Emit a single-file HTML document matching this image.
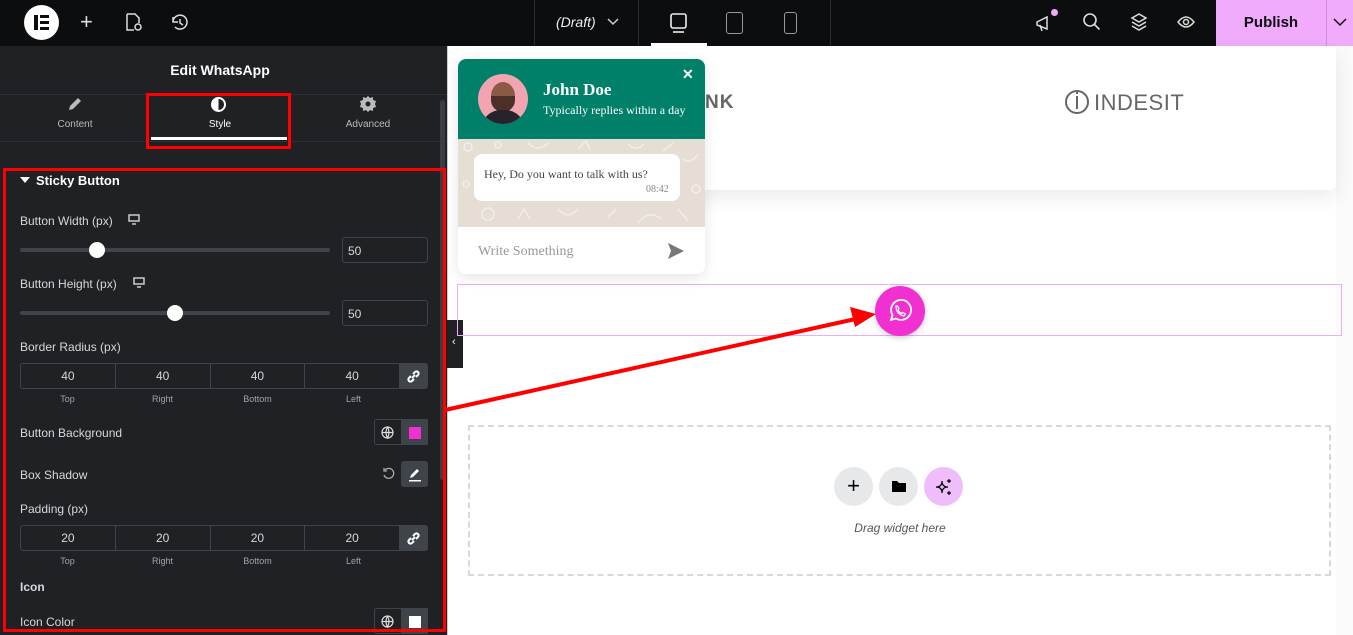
<!DOCTYPE html>
<html><head><meta charset="utf-8"><style>
*{box-sizing:border-box;margin:0;padding:0}
body{width:1353px;height:635px;overflow:hidden;background:#fff;font-family:"Liberation Sans",sans-serif;position:relative}
.top{position:absolute;left:0;top:0;width:1353px;height:46px;background:#0c0d0e}
.panel{position:absolute;left:0;top:46px;width:447px;height:589px;background:#1f2124;color:#d5d8dc}
.lbl{position:absolute;left:20px;font-size:12px;color:#d5d8dc}
.abs{position:absolute}
.track{position:absolute;left:20px;width:310px;height:4px;background:#3f444b;border-radius:2px}
.knob{position:absolute;width:16px;height:16px;border-radius:50%;background:#fff}
.num{position:absolute;left:342px;width:86px;height:26px;border:1px solid #3f444b;border-radius:3px;font-size:12px;color:#d5d8dc;padding:6px 5px}
.dims{position:absolute;left:20px;width:408px;height:26px;border:1px solid #3f444b;border-radius:3px;display:flex}
.dims div{flex:1;border-right:1px solid #3f444b;text-align:center;font-size:12px;line-height:24px;color:#d5d8dc}
.dims div.lk{flex:0 0 27px;background:#3f444b;border:none;position:relative}
.sub{position:absolute;font-size:9px;color:#9da5ae;width:95px;text-align:center}
</style></head><body>
<div class="top">
 <div class="abs" style="left:24px;top:5px;width:35px;height:35px;border-radius:50%;background:#fff"></div>
 <div class="abs" style="left:34px;top:15px;width:4px;height:15px;background:#0c0d0e"></div>
 <div class="abs" style="left:40px;top:15px;width:9px;height:3px;background:#0c0d0e"></div>
 <div class="abs" style="left:40px;top:21px;width:9px;height:3px;background:#0c0d0e"></div>
 <div class="abs" style="left:40px;top:27px;width:9px;height:3px;background:#0c0d0e"></div>
 <div class="abs" style="left:80px;top:11px;color:#ddd;font-size:22px;line-height:22px">+</div>
 <svg class="abs" style="left:124px;top:13px" width="20" height="20" fill="none" stroke="#ddd" stroke-width="1.5"><path d="M3 1h8l4 4v5M3 1v16h7"/><circle cx="14" cy="14" r="3"/></svg>
 <svg class="abs" style="left:170px;top:13px" width="20" height="20" fill="none" stroke="#ddd" stroke-width="1.5"><path d="M3 9a7 7 0 1 1 2 5M3 4v5h5M10 6v4l3 2"/></svg>
 <div class="abs" style="left:534px;top:0;width:1px;height:46px;background:#2a2c30"></div>
 <div class="abs" style="left:556px;top:14px;color:#eee;font-size:14px;font-style:italic">(Draft)</div>
 <svg class="abs" style="left:607px;top:17px" width="12" height="10" fill="none" stroke="#ccc" stroke-width="1.5"><path d="M1 2l5 5 5-5"/></svg>
 <div class="abs" style="left:638px;top:0;width:1px;height:46px;background:#2a2c30"></div>
 <svg class="abs" style="left:668px;top:12px" width="22" height="22" fill="none" stroke="#eee" stroke-width="1.6"><rect x="3" y="2" width="15" height="14" rx="2"/><path d="M5 20h11"/></svg>
 <div class="abs" style="left:651px;top:43px;width:56px;height:3px;background:#fff"></div>
 <div class="abs" style="left:726px;top:12px;width:17px;height:22px;border:1.5px solid #999;border-radius:3px"></div>
 <div class="abs" style="left:784px;top:12px;width:13px;height:22px;border:1.5px solid #999;border-radius:3px"></div>
 <div class="abs" style="left:830px;top:0;width:1px;height:46px;background:#2a2c30"></div>
 <svg class="abs" style="left:1034px;top:12px" width="22" height="22" fill="none" stroke="#ddd" stroke-width="1.5"><path d="M3 10l10-5v12L3 13zM6 13l2 6"/></svg>
 <div class="abs" style="left:1051px;top:9px;width:7px;height:7px;border-radius:50%;background:#f0abfc"></div>
 <svg class="abs" style="left:1082px;top:12px" width="20" height="20" fill="none" stroke="#ddd" stroke-width="1.6"><circle cx="8" cy="8" r="6"/><path d="M12.5 12.5l5 5"/></svg>
 <svg class="abs" style="left:1129px;top:12px" width="20" height="20" fill="none" stroke="#ddd" stroke-width="1.5"><path d="M10 2l7 4-7 4-7-4zM3 10l7 4 7-4M3 14l7 4 7-4"/></svg>
 <svg class="abs" style="left:1176px;top:12px" width="20" height="20" fill="none" stroke="#ddd" stroke-width="1.5"><path d="M2 10q8-10 16 0q-8 10-16 0z"/><circle cx="10" cy="10" r="2.5"/></svg>
 <div class="abs" style="left:1216px;top:0;width:110px;height:46px;background:#f0abfc;color:#0c0d0e;font-size:15px;font-weight:bold;text-align:center;line-height:46px">Publish</div>
 <div class="abs" style="left:1326px;top:0;width:1px;height:46px;background:#d68be0"></div>
 <div class="abs" style="left:1327px;top:0;width:26px;height:46px;background:#f0abfc"></div>
 <svg class="abs" style="left:1333px;top:17px" width="14" height="10" fill="none" stroke="#0c0d0e" stroke-width="1.5"><path d="M1 2l6 6 6-6"/></svg>
</div>

<div class="panel">
 <div class="abs" style="left:0;top:16px;width:440px;text-align:center;font-size:14px;font-weight:bold;color:#fff">Edit WhatsApp</div>
 <div class="abs" style="left:0;top:48px;width:447px;height:1px;background:#2d3035"></div>
 <div class="abs" style="left:0;top:95px;width:447px;height:1px;background:#2d3035"></div>
 <svg class="abs" style="left:67px;top:50px" width="16" height="16" fill="#bbb"><path d="M2 14l1-4 8-8 3 3-8 8z"/></svg>
 <div class="abs" style="left:40px;top:73px;width:70px;text-align:center;font-size:10px;color:#bbb">Content</div>
 <div class="abs" style="left:211px;top:51px;width:15px;height:15px;border-radius:50%;border:2px solid #fff;background:linear-gradient(90deg,#fff 50%,transparent 50%)"></div>
 <div class="abs" style="left:185px;top:73px;width:70px;text-align:center;font-size:10px;color:#fff">Style</div>
 <div class="abs" style="left:151px;top:91px;width:136px;height:3px;background:#fff"></div>
 <svg class="abs" style="left:360px;top:50px" width="16" height="16" fill="#bbb"><path d="M8 0l2 2 3-1 0 3 3 1-1 3 1 3-3 1 0 3-3-1-2 2-2-2-3 1 0-3-3-1 1-3-1-3 3-1 0-3 3 1z"/><circle cx="8" cy="8" r="2.5" fill="#1f2124"/></svg>
 <div class="abs" style="left:333px;top:73px;width:70px;text-align:center;font-size:10px;color:#bbb">Advanced</div>
 <div class="abs" style="left:440px;top:54px;width:5px;height:380px;background:#3a3d42;border-radius:3px"></div>

 <div class="abs" style="left:20px;top:131px;width:0;height:0;border-left:5px solid transparent;border-right:5px solid transparent;border-top:6px solid #fff"></div>
 <div class="abs" style="left:36px;top:127px;font-size:13px;font-weight:bold;color:#fff">Sticky Button</div>

 <div class="lbl" style="top:168px">Button Width (px)</div>
 <svg class="abs" style="left:128px;top:168px" width="12" height="11" fill="none" stroke="#ccc" stroke-width="1.5"><rect x="1" y="1" width="10" height="6"/><path d="M4 10h4"/></svg>
 <div class="track" style="top:202px"></div><div class="knob" style="left:89px;top:196px"></div>
 <div class="num" style="top:191px">50</div>

 <div class="lbl" style="top:231px">Button Height (px)</div>
 <svg class="abs" style="left:133px;top:231px" width="12" height="11" fill="none" stroke="#ccc" stroke-width="1.5"><rect x="1" y="1" width="10" height="6"/><path d="M4 10h4"/></svg>
 <div class="track" style="top:265px"></div><div class="knob" style="left:167px;top:259px"></div>
 <div class="num" style="top:254px">50</div>

 <div class="lbl" style="top:294px">Border Radius (px)</div>
 <div class="dims" style="top:317px"><div>40</div><div>40</div><div>40</div><div>40</div><div class="lk"><svg style="position:absolute;left:7px;top:6px" width="13" height="13" fill="none" stroke="#fff" stroke-width="2"><path d="M5 8l3-3M4 6l-2 2a2 2 0 0 0 3 3l2-2M9 7l2-2a2 2 0 0 0-3-3L6 4"/></svg></div></div>
 <div class="sub" style="left:20px;top:348px">Top</div><div class="sub" style="left:115px;top:348px">Right</div><div class="sub" style="left:210px;top:348px">Bottom</div><div class="sub" style="left:306px;top:348px">Left</div>

 <div class="lbl" style="top:380px">Button Background</div>
 <div class="abs" style="left:374px;top:373px;width:54px;height:26px;border:1px solid #3f444b;border-radius:3px"></div>
 <div class="abs" style="left:401px;top:373px;width:27px;height:26px;background:#3f444b"></div>
 <div class="abs" style="left:409px;top:381px;width:12px;height:12px;background:#f030d0"></div>
 <svg class="abs" style="left:381px;top:380px" width="13" height="13" fill="none" stroke="#ddd" stroke-width="1.2"><circle cx="6.5" cy="6.5" r="5.5"/><path d="M1 6.5h11M6.5 1q-3 5.5 0 11q3-5.5 0-11"/></svg>

 <div class="lbl" style="top:422px">Box Shadow</div>
 <svg class="abs" style="left:382px;top:421px" width="13" height="13" fill="none" stroke="#aaa" stroke-width="1.3"><path d="M3 3a5 5 0 1 1-1 5M2 1v3h3"/></svg>
 <div class="abs" style="left:401px;top:415px;width:27px;height:26px;background:#3f444b;border-radius:3px"></div>
 <svg class="abs" style="left:407px;top:420px" width="16" height="16" fill="#fff"><path d="M3 12l1-3 6-6 2 2-6 6z"/><rect x="2" y="14" width="12" height="1.5"/></svg>

 <div class="lbl" style="top:456px">Padding (px)</div>
 <div class="dims" style="top:479px"><div>20</div><div>20</div><div>20</div><div>20</div><div class="lk"><svg style="position:absolute;left:7px;top:6px" width="13" height="13" fill="none" stroke="#fff" stroke-width="2"><path d="M5 8l3-3M4 6l-2 2a2 2 0 0 0 3 3l2-2M9 7l2-2a2 2 0 0 0-3-3L6 4"/></svg></div></div>
 <div class="sub" style="left:20px;top:510px">Top</div><div class="sub" style="left:115px;top:510px">Right</div><div class="sub" style="left:210px;top:510px">Bottom</div><div class="sub" style="left:306px;top:510px">Left</div>

 <div class="lbl" style="top:534px;font-weight:bold">Icon</div>
 <div class="lbl" style="top:569px">Icon Color</div>
 <div class="abs" style="left:374px;top:562px;width:54px;height:26px;border:1px solid #3f444b;border-radius:3px"></div>
 <div class="abs" style="left:401px;top:562px;width:27px;height:26px;background:#3f444b"></div>
 <div class="abs" style="left:409px;top:570px;width:12px;height:12px;background:#fff"></div>
 <svg class="abs" style="left:381px;top:569px" width="13" height="13" fill="none" stroke="#ddd" stroke-width="1.2"><circle cx="6.5" cy="6.5" r="5.5"/><path d="M1 6.5h11M6.5 1q-3 5.5 0 11q3-5.5 0-11"/></svg>
</div>

<div class="abs" style="left:447px;top:46px;width:1px;height:589px;background:#ccc"></div>
<div class="abs" style="left:447px;top:320px;width:16px;height:48px;background:#1f2124"></div>
<div class="abs" style="left:452px;top:336px;color:#fff;font-size:11px">‹</div>

<!-- canvas -->
<div class="abs" style="left:1336px;top:46px;width:17px;height:589px;background:#fafafa"></div>
<div class="abs" style="left:480px;top:46px;width:856px;height:144px;background:#fff;border-radius:0 0 6px 6px;box-shadow:0 8px 20px rgba(0,0,0,.08)"></div>
<div class="abs" style="left:705px;top:92px;font-size:19px;font-weight:bold;color:#666;letter-spacing:1px">NK</div>
<div class="abs" style="left:1065px;top:90px;width:24px;height:24px;border:2px solid #666;border-radius:50%"></div>
<div class="abs" style="left:1076px;top:96px;width:2px;height:13px;background:#666"></div>
<div class="abs" style="left:1076px;top:92px;width:2px;height:2px;background:#666"></div>
<div class="abs" style="left:1094px;top:90px;font-size:22px;color:#666;letter-spacing:0.5px">INDESIT</div>

<div class="abs" style="left:457px;top:284px;width:885px;height:52px;border:1px solid #f0abfc"></div>
<div class="abs" style="left:875px;top:286px;width:50px;height:50px;border-radius:50%;background:#f030d0;box-shadow:0 2px 6px rgba(0,0,0,.2)"></div>
<svg class="abs" style="left:887px;top:298px" width="26" height="26" fill="none" stroke="#fff" stroke-width="1.8"><path d="M4 22l1.5-5A10 10 0 1 1 9 20.5z"/><path d="M9 8q0 8 8 10l1.5-2-2.5-1.5-1 1q-3-1-4-4l1-1L10.5 8z" stroke-width="1.2"/></svg>

<svg class="abs" style="left:0;top:0" width="1353" height="635"><line x1="445" y1="410" x2="860" y2="318" stroke="#f00" stroke-width="4"/><path d="M876 314l-26-7 5 20z" fill="#f00"/></svg>

<div class="abs" style="left:146px;top:93px;width:145px;height:56px;border:3px solid #f00"></div>
<div class="abs" style="left:3px;top:168px;width:443px;height:464px;border:3px solid #f00"></div>

<!-- chat -->
<div class="abs" style="left:458px;top:59px;width:247px;height:215px;border-radius:8px;background:#fff;box-shadow:0 4px 14px rgba(0,0,0,.1);overflow:hidden">
 <div style="height:80px;background:#008069;position:relative">
  <div class="abs" style="left:20px;top:15px;width:50px;height:50px;border-radius:50%;background:#f2a5b0;overflow:hidden">
   <div class="abs" style="left:13px;top:8px;width:24px;height:28px;border-radius:50%;background:#8a5a44"></div>
   <div class="abs" style="left:13px;top:22px;width:24px;height:16px;border-radius:0 0 12px 12px;background:#4a3028"></div>
   <div class="abs" style="left:3px;top:36px;width:44px;height:20px;border-radius:20px 20px 0 0;background:#26232a"></div>
  </div>
  <div class="abs" style="left:85px;top:21px;font-family:'Liberation Serif',serif;font-weight:bold;font-size:17px;color:#fff">John Doe</div>
  <div class="abs" style="left:85px;top:44px;font-family:'Liberation Serif',serif;font-size:12px;color:#fff">Typically replies within a day</div>
  <div class="abs" style="left:224px;top:7px;color:#fff;font-size:14px;font-weight:bold">✕</div>
 </div>
 <div style="height:88px;background:#e6ddd4;position:relative;overflow:hidden">
  <svg class="abs" style="left:0;top:0" width="247" height="88" fill="none" stroke="#f3eee8" stroke-width="1.5"><circle cx="10" cy="8" r="4"/><circle cx="40" cy="6" r="3"/><path d="M70 4q10 10 20 0M120 10l8-8 4 8M170 5q8 8 16 0M205 12l10-8M225 20q8 6 15-5"/><circle cx="30" cy="75" r="6"/><path d="M60 80l6-10 6 10M100 70q10 12 20 0M150 78l8-8M180 84q10-14 24-4M220 70l10 12"/><circle cx="238" cy="50" r="4"/><circle cx="8" cy="45" r="3"/></svg>
  <div class="abs" style="left:16px;top:15px;width:206px;height:47px;background:#fff;border-radius:8px"></div>
  <div class="abs" style="left:26px;top:28px;font-family:'Liberation Serif',serif;font-size:12px;color:#444">Hey, Do you want to talk with us?</div>
  <div class="abs" style="left:188px;top:45px;font-family:'Liberation Serif',serif;font-size:10px;color:#888">08:42</div>
 </div>
 <div style="position:relative;height:47px">
  <div class="abs" style="left:20px;top:17px;font-family:'Liberation Serif',serif;font-size:14px;color:#999">Write Something</div>
  <svg class="abs" style="left:209px;top:15px" width="18" height="18" fill="#777"><path d="M1 1l16 8-16 8 3-8z"/></svg>
 </div>
</div>

<!-- drop zone -->
<div class="abs" style="left:468px;top:425px;width:863px;height:151px;border:2px dashed #d5d8dc"></div>
<div class="abs" style="left:834px;top:467px;width:39px;height:39px;border-radius:50%;background:#e6e8ea;text-align:center;line-height:38px;font-size:22px;color:#000">+</div>
<div class="abs" style="left:879px;top:467px;width:39px;height:39px;border-radius:50%;background:#e6e8ea"></div>
<svg class="abs" style="left:891px;top:479px" width="16" height="14" fill="#000"><path d="M1 2h5l2 2h7v9H1z"/></svg>
<div class="abs" style="left:924px;top:467px;width:39px;height:39px;border-radius:50%;background:#f0bdfc"></div>
<svg class="abs" style="left:934px;top:477px" width="20" height="20" fill="none" stroke="#000" stroke-width="1.2"><path d="M8 4q0 6 6 6q-6 0-6 6q0-6-6-6q6 0 6-6z"/><path d="M15 2v4M13 4h4M15 14v4M13 16h4"/></svg>
<div class="abs" style="left:800px;top:521px;width:200px;text-align:center;font-size:12px;font-style:italic;color:#555">Drag widget here</div>
</body></html>
